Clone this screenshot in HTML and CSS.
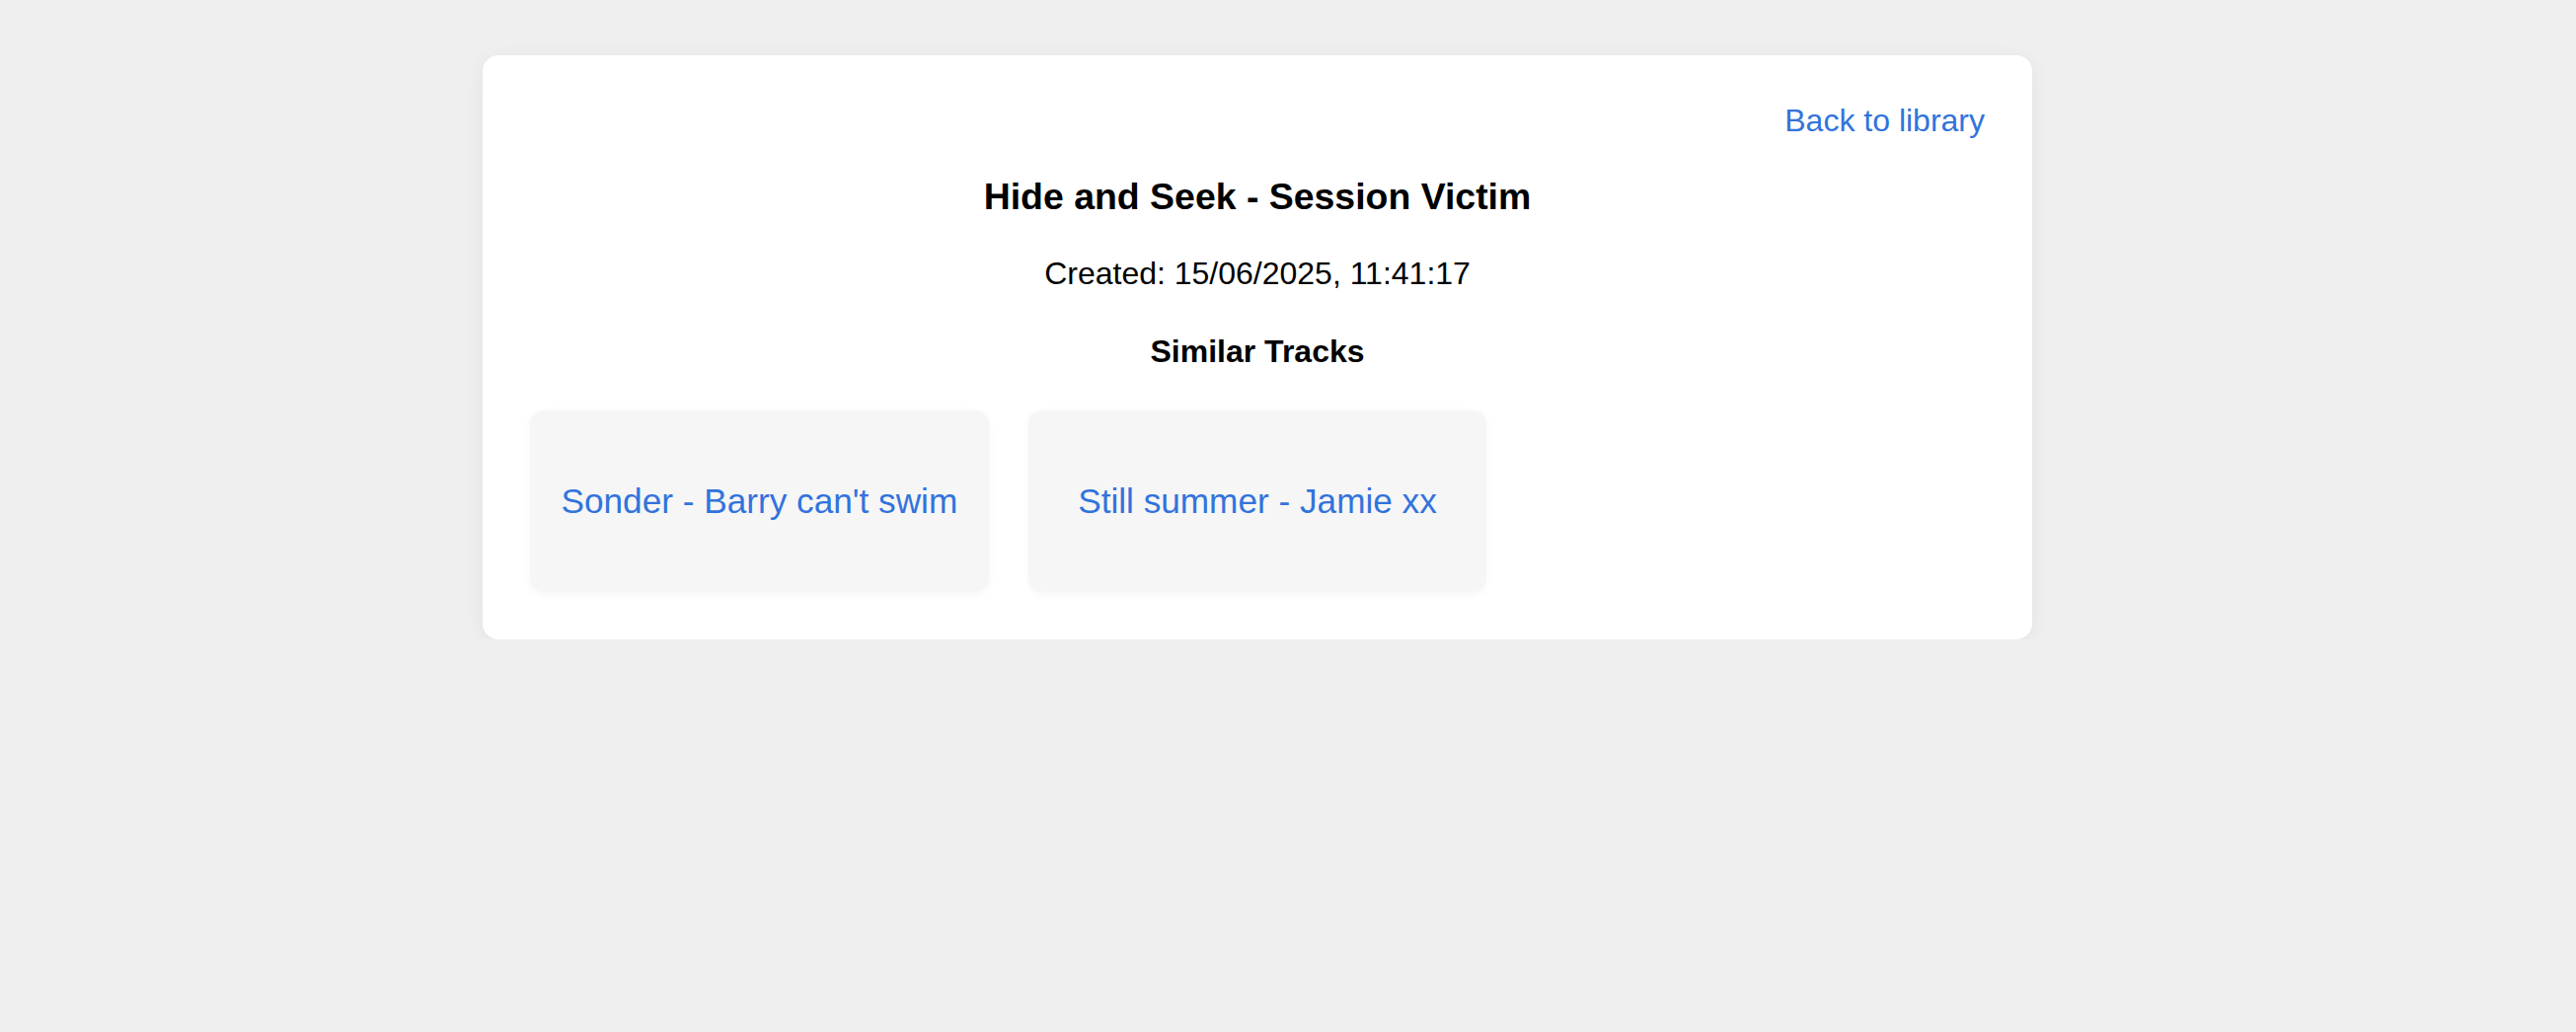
FILE: index.html
```html
<!DOCTYPE html>
<html lang="en">
<head>
<meta charset="utf-8">
<title>Hide and Seek - Session Victim</title>
<link rel="stylesheet" href="styles.css">
</head>
<body>
<main class="page">
  <section class="card">
    <div class="top-bar">
      <a class="back-link" href="#">Back to library</a>
    </div>
    <h3 class="title">Hide and Seek - Session Victim</h3>
    <p class="created">Created: 15/06/2025, 11:41:17</p>
    <h4 class="section-title">Similar Tracks</h4>
    <div class="tracks">
      <a class="track" href="#">Sonder - Barry can't swim</a>
      <a class="track" href="#">Still summer - Jamie xx</a>
    </div>
  </section>
</main>
</body>
</html>
```
FILE: styles.css
```css
html, body {
  margin: 0;
  padding: 0;
  background: #efefef;
  font-family: "Liberation Sans", Arial, sans-serif;
  color: #000;
}

.page {
  padding: 56px 0 0 489px;
}

.card {
  width: 1570px;
  box-sizing: border-box;
  background: #fff;
  border-radius: 16px;
  padding: 48px;
  box-shadow: 0 4px 20px rgba(0, 0, 0, 0.06);
}

.top-bar {
  text-align: right;
  font-size: 32px;
}

.back-link {
  color: #3273dc;
  text-decoration: none;
}

.title {
  font-size: 37.44px;
  margin: 37.44px 0;
  text-align: center;
  font-weight: bold;
}

.created {
  font-size: 32px;
  margin: 32px 0;
  text-align: center;
}

.section-title {
  font-size: 32px;
  margin: 42.6px 0 41px;
  text-align: center;
  font-weight: bold;
}

.tracks {
  display: grid;
  grid-template-columns: repeat(3, 1fr);
  gap: 40px;
}

.track {
  display: block;
  background: #f6f6f6;
  border-radius: 14px;
  padding: 72px 10px;
  line-height: 40px;
  font-size: 35.2px;
  text-align: center;
  color: #3273dc;
  text-decoration: none;
  box-shadow: 0 2px 8px rgba(0, 0, 0, 0.04);
}
```
